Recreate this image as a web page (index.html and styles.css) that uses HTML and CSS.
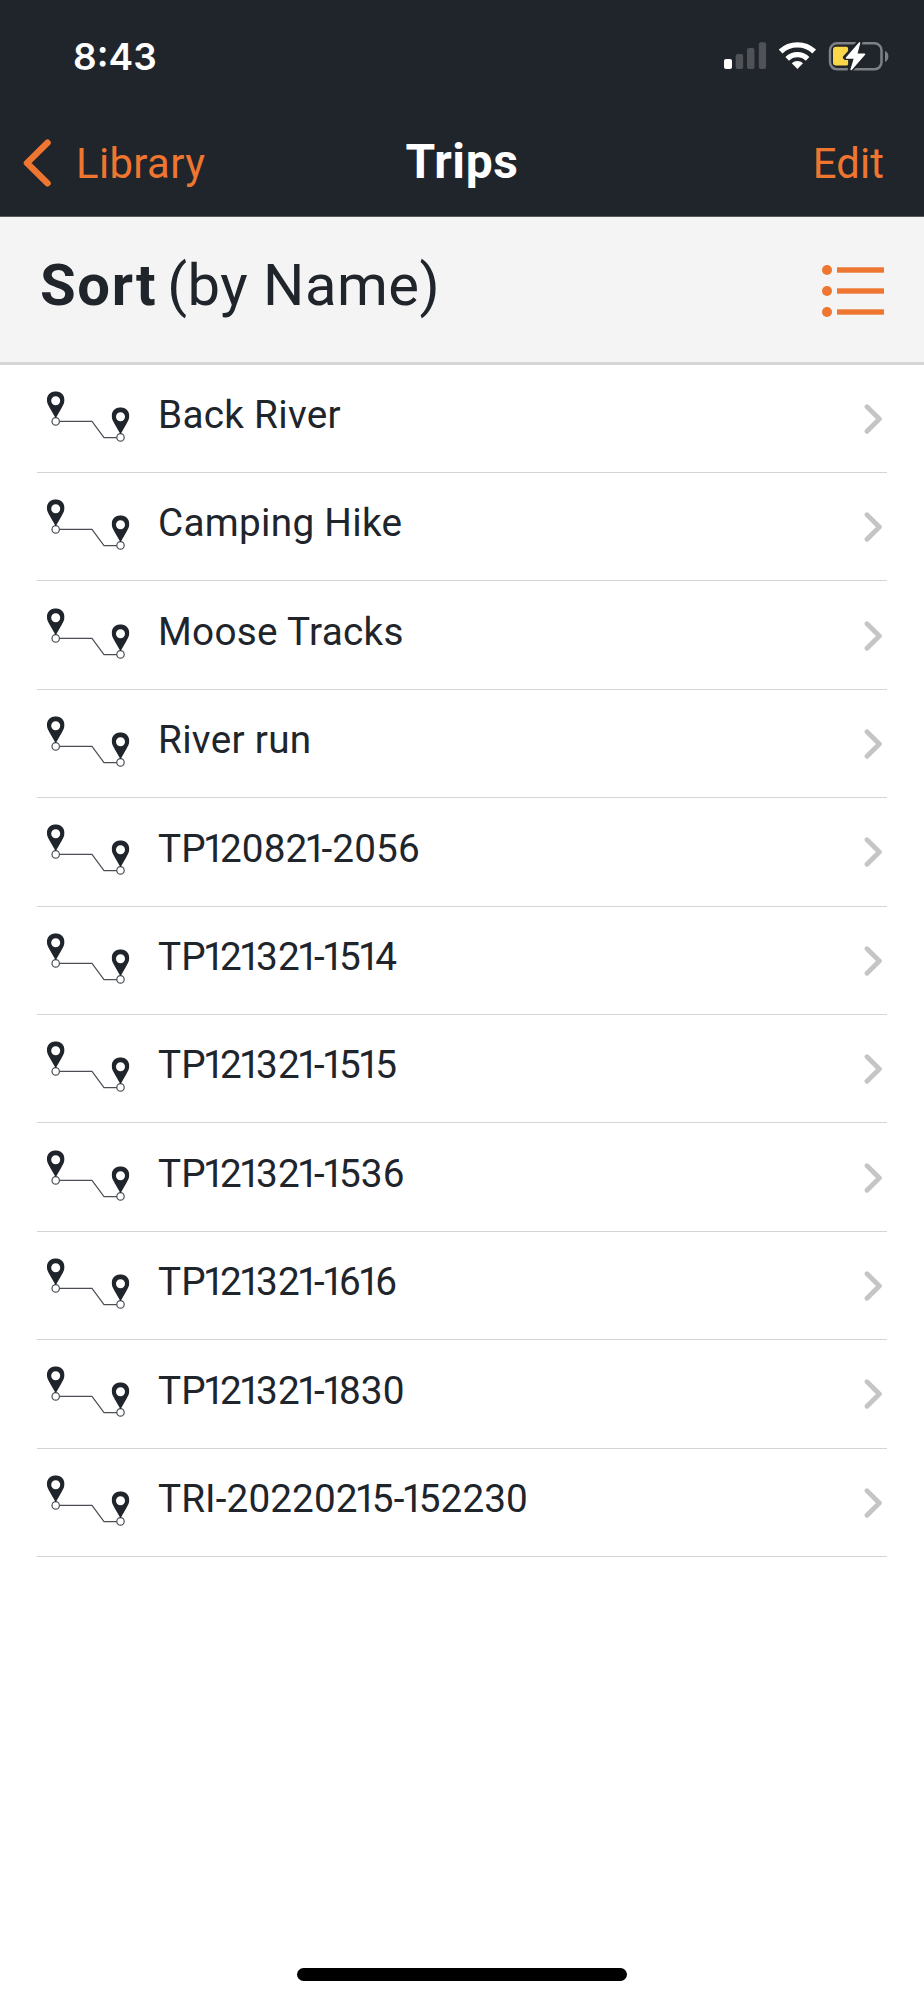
FILE: index.html
```html
<!DOCTYPE html>
<html lang="en">
<head>
  <meta charset="UTF-8" />
  <meta name="viewport" content="width=device-width, initial-scale=1.0" />
  <title>Trips</title>
  <link rel="stylesheet" href="styles.css">
</head>
<body>
  <!-- shared icons -->
  <svg class="defs" width="0" height="0" aria-hidden="true">
    <symbol id="pin" viewBox="0 0 18 27">
      <path fill-rule="evenodd" d="M9 0C3.9 0 .2 3.8 .2 8.8c0 3 1.5 5.4 3.2 8.4L9 27l5.600-9.800c1.700-3 3.200-5.400 3.200-8.400C17.800 3.800 14.100 0 9 0zM9 4.900a4.500 4.500 0 1 1 0 9 4.500 4.500 0 0 1 0-9z"/>
    </symbol>
    <symbol id="route" viewBox="0 0 121 108">
      <path d="M22.500 56.400H55L67 72.600H80" fill="none" stroke="#4b4f55" stroke-width="1.200"/>
      <circle cx="18.700" cy="56.400" r="3.700" fill="#fff" stroke="#4b4f55" stroke-width="1.200"/>
      <circle cx="83.500" cy="72.400" r="3.700" fill="#fff" stroke="#4b4f55" stroke-width="1.200"/>
      <use href="#pin" x="9.700" y="26.300" width="18" height="27"/>
      <use href="#pin" x="74.500" y="42.300" width="18" height="27"/>
    </symbol>
    <symbol id="chevron" viewBox="0 0 22 32">
      <path d="M3 3.700L15.400 16L3 28.300" fill="none" stroke="#c5c5c7" stroke-width="4.800" stroke-linecap="round" stroke-linejoin="round"/>
    </symbol>
  </svg>

  <header>
    <div class="status">
      <span class="time">8:43</span>
      <svg class="status-icons" width="166" height="30" viewBox="0 0 166 30">
        <rect x="0" y="18" width="8" height="10" rx="2" fill="#fff"/>
        <g fill="#4f5257">
          <rect x="11.700" y="13" width="7.500" height="15" rx="2"/>
          <rect x="23" y="7" width="7.500" height="21" rx="2"/>
          <rect x="34.800" y="1.300" width="7.300" height="26.700" rx="2"/>
        </g>
        <g fill="none" stroke="#fff">
          <path d="M56.600 10.500a24.500 24.500 0 0 1 33.600 0" stroke-width="5.400"/>
          <path d="M63.200 17.800a14.800 14.800 0 0 1 20.400 0" stroke-width="5.200"/>
        </g>
        <path d="M73.400 28l-5.600-5.700a8 8 0 0 1 11.200 0z" fill="#fff"/>
        <rect x="106" y="2.300" width="51.500" height="26" rx="7" fill="none" stroke="#7d8084" stroke-width="2.500"/>
        <path d="M161 10c4.500 1.500 4.500 9 0 11z" fill="#7d8084"/>
        <path d="M112 5.800h10.500q1.600 0 1.600 1.600v15.500q0 1.600-1.600 1.600H112q-3 0-3-3V8.800q0-3 3-3z" fill="#f9d748"/>
        <path d="M136 .8L121.500 16.500h8l-3.300 12.700L141 13.300h-8z" fill="#fff" stroke="#20242b" stroke-width="5" stroke-linejoin="round"/>
        <path d="M135.500 2L122.500 17h8.200l-3.500 11.500L140.500 13.300h-8z" fill="#fff" stroke="#fff" stroke-width="1.600" stroke-linejoin="round"/>
      </svg>
    </div>
    <nav>
      <a class="back" href="#">
        <svg width="32" height="50" viewBox="0 0 32 50">
          <path d="M25.500 4.700L5 25L25.500 45.300" fill="none" stroke="#ee7630" stroke-width="6.500" stroke-linecap="round" stroke-linejoin="round"/>
        </svg>
        <span>Library</span>
      </a>
      <h1>Trips</h1>
      <a class="edit" href="#">Edit</a>
    </nav>
  </header>

  <section class="sort">
    <h2><b>Sort</b><span>(by Name)</span></h2>
    <svg width="62" height="54" viewBox="0 0 62 54" fill="#ee7630">
      <circle cx="5" cy="6" r="5"/><rect x="15" y="3.300" width="47" height="5.400"/>
      <circle cx="5" cy="27" r="5"/><rect x="15" y="24.300" width="47" height="5.400"/>
      <circle cx="5" cy="48" r="5"/><rect x="15" y="45.300" width="47" height="5.400"/>
    </svg>
  </section>

  <ul class="trips" id="trips"></ul>

  <footer><div class="home-bar"></div></footer>

  <script>
    const trips = [
      'Back River',
      'Camping Hike',
      'Moose Tracks',
      'River run',
      'TP120821-2056',
      'TP121321-1514',
      'TP121321-1515',
      'TP121321-1536',
      'TP121321-1616',
      'TP121321-1830',
      'TRI-20220215-152230'
    ];
    // the digit 1 is set narrower than the other figures
    const label = name => name.replace(/(.)1/g, '<span class="pre">$1</span><span class="one">1</span>');
    document.getElementById('trips').innerHTML = trips.map(name => `
      <li>
        <svg class="route"><use href="#route"/></svg>
        <span class="name ${/\d/.test(name) ? 'code' : ''}">${label(name)}</span>
        <svg class="chevron"><use href="#chevron"/></svg>
      </li>`).join('');
  </script>
</body>
</html>
```

FILE: styles.css
```css
:root {
  --dark: #20242b;
  --orange: #ee7630;
  --panel: #f4f4f4;
  --line: #d5d5d7;
}
*, *::before, *::after { box-sizing: border-box; }
body {
  margin: 0;
  height: 2000px;
  display: flex; flex-direction: column;
  font-family: Roboto, sans-serif;
  background: #fff;
  color: var(--dark);
}
.defs { display: none; }
header {
  height: 217px;
  background: var(--dark);
  border-bottom: 1px solid #55585d;
}
.status {
  height: 112px;
  padding: 0 34px 0 73px;
  display: flex; justify-content: space-between; align-items: center;
}
.time {
  font-family: Inter, sans-serif;
  font-size: 37px; font-weight: 600;
  color: #fff;
}
nav {
  height: 104px;
  padding: 0 22px;
  display: grid; grid-template-columns: 1fr auto 1fr; align-items: center;
}
nav a {
  color: var(--orange);
  font-size: 41.8px; line-height: 50px;
  letter-spacing: .4px;
  text-decoration: none;
}
.back { display: flex; align-items: center; gap: 22px; }
.back svg { display: block; margin-bottom: 2px; }
.edit { justify-self: end; margin-right: 18px; letter-spacing: .1px; }
h1 {
  margin: 0 0 4px;
  font-size: 48px; line-height: 56px; font-weight: 700;
  letter-spacing: .6px;
  color: #fff;
}
.sort {
  height: 147.6px;
  padding: 0 40px;
  display: flex; justify-content: space-between; align-items: center;
  background: var(--panel);
  border-bottom: 3px solid #d6d6d6;
}
.sort h2 {
  display: flex; gap: 10px;
  margin: 0 0 8px;
  font-size: 58px; line-height: 70px; font-weight: 400;
  letter-spacing: .5px;
}
.sort b { letter-spacing: 1.6px; }
.sort svg { margin-top: 3px; }
.trips {
  flex: 1;
  margin: 0; padding: 0 37px;
  list-style: none;
}
.trips li {
  height: 108.4px;
  padding-top: 1px;
  display: flex; align-items: center;
  border-bottom: 1px solid var(--line);
}
.route { width: 121px; height: 108px; flex: none; fill: var(--dark); }
.name {
  flex: 1;
  padding-bottom: 7.5px;
  font-size: 38.7px; line-height: 46px;
  letter-spacing: .3px;
}
.code { letter-spacing: .1px; }
.pre { letter-spacing: -2.7px; }
.one { letter-spacing: -4.7px; }
.chevron { width: 22px; height: 32px; margin-right: 1px; }
footer {
  height: 32px;
  display: flex; justify-content: center;
}
.home-bar {
  width: 330px; height: 13px;
  border-radius: 7px;
  background: #000;
}
```
